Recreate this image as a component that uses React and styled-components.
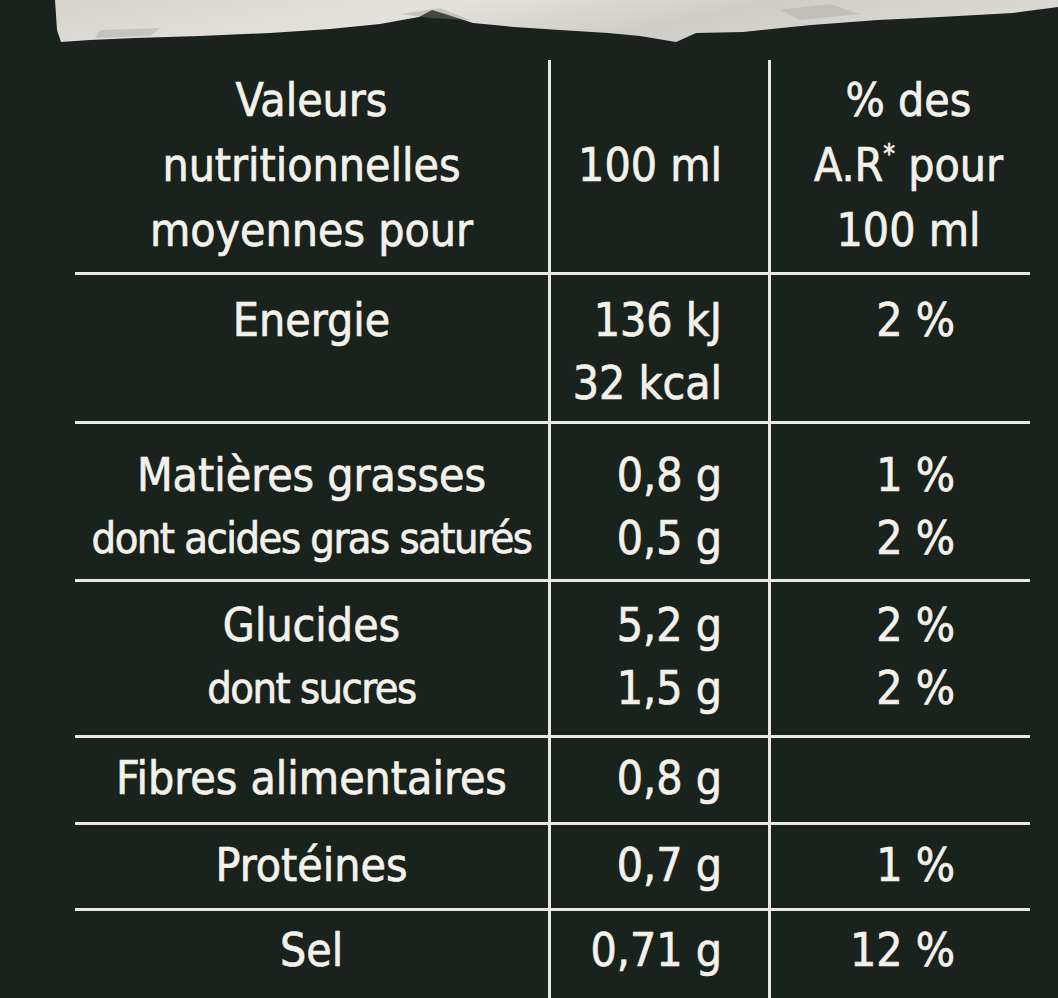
import React from 'react'
import styled, { createGlobalStyle } from 'styled-components'

const GlobalStyle = createGlobalStyle`
  html, body {
    margin: 0;
    padding: 0;
    background: #1a221d;
  }
`

const rows = [
    { pad: 17, label: ['Energie'], value: ['136 kJ', '32 kcal'], pct: ['2 %'] },
    { pad: 23, label: ['Matières grasses', 'dont acides gras saturés'], value: ['0,8 g', '0,5 g'], pct: ['1 %', '2 %'] },
    { pad: 15, label: ['Glucides', 'dont sucres'], value: ['5,2 g', '1,5 g'], pct: ['2 %', '2 %'] },
    { pad: 12, label: ['Fibres alimentaires'], value: ['0,8 g'], pct: [] },
    { pad: 12, label: ['Protéines'], value: ['0,7 g'], pct: ['1 %'] },
    { pad: 11, label: ['Sel'], value: ['0,71 g'], pct: ['12 %'] },
]

const Paper = () => (
    <PaperStrip viewBox="0 0 1058 45" preserveAspectRatio="none">
        <defs>
            <linearGradient id="paper" x1="0" y1="0" x2="1" y2="0.2">
                <stop offset="0" stopColor="#d6d4cc" />
                <stop offset="0.4" stopColor="#e3e1da" />
                <stop offset="0.7" stopColor="#cfcdc5" />
                <stop offset="1" stopColor="#dbd9d1" />
            </linearGradient>
        </defs>
        <polygon
            fill="url(#paper)"
            points="55,0 1058,0 1058,7 1013,13 940,17 878,20 811,25 743,32 696,33 676,42 640,36 608,33 560,30 514,27 473,23 445,14 432,10 419,17 380,24 330,29 270,33 200,36 135,38 90,40 61,42 57,30"
        />
        <polygon fill="#8f8d86" opacity="0.35" points="400,14 440,8 470,20 430,18" />
        <polygon fill="#8f8d86" opacity="0.3" points="100,30 160,28 150,36 95,38" />
        <polygon fill="#8f8d86" opacity="0.25" points="780,10 830,4 860,14 800,20" />
    </PaperStrip>
)

const App = () => {
    const header = {
        pad: 8,
        label: ['Valeurs', 'nutritionnelles', 'moyennes pour'],
        value: ['', '100 ml', ''],
        pct: ['% des', <>A.R<Star>*</Star> pour</>, '100 ml'],
    }
    const all = [header, ...rows]
    return (
        <Page>
            <GlobalStyle />
            <Paper />
            <Table>
                {all.map((row, r) => (
                    <React.Fragment key={r}>
                        <Cell $col={0} $row={r} $pad={row.pad} $head={r === 0}>
                            {row.label.map((t, i) => (
                                <Line key={i} $sub={t.startsWith('dont')}>{t}</Line>
                            ))}
                        </Cell>
                        <Cell $col={1} $row={r} $pad={row.pad} $head={r === 0} $align="end">
                            {row.value.map((t, i) => <Line key={i}>{t || '\u00a0'}</Line>)}
                        </Cell>
                        <Cell $col={2} $row={r} $pad={row.pad} $head={r === 0} $align={r === 0 ? 'center' : 'end'}>
                            {row.pct.map((t, i) => <Line key={i}>{t}</Line>)}
                        </Cell>
                    </React.Fragment>
                ))}
            </Table>
        </Page>
    )
}

export default App

const chalk = '#ebe9e2'

const Page = styled.div`
display : flex;
flex-direction : column;
width : 1058px;
height : 998px;
overflow : hidden;
background-color : #1a221d;
font-family : "DejaVu Sans Condensed", "Liberation Sans Narrow", "DejaVu Sans", sans-serif;
font-stretch : condensed;
color : #f3f1ea;
`

const PaperStrip = styled.svg`
display : block;
width : 1058px;
height : 45px;
flex-shrink : 0;
`

const Table = styled.div`
display : grid;
grid-template-columns : 473px 220px 262px;
grid-template-rows : 212px 149px 158px 156px 87px 86px 1fr;
margin : 15px 0 0 75px;
height : 938px;
`

const Cell = styled.div`
box-sizing : border-box;
display : flex;
flex-direction : column;
align-items : ${p => p.$align === 'end' ? 'flex-end' : 'center'};
padding-top : ${p => p.$pad - (p.$row > 0 ? 3 : 0)}px;
padding-right : ${p => p.$col === 1 ? 46 : p.$col === 2 && p.$align === 'end' ? 75 : 0}px;
padding-left : ${p => p.$col === 2 && p.$align === 'center' ? 16 : 0}px;
border-left : ${p => p.$col > 0 ? `3px solid ${chalk}` : 'none'};
border-top : ${p => p.$row > 0 ? `3px solid ${chalk}` : 'none'};
font-size : 46px;
line-height : ${p => p.$head ? 65 : 63}px;
-webkit-text-stroke : 0.7px #f3f1ea;
`

const Line = styled.span`
display : block;
white-space : nowrap;
font-size : ${p => p.$sub ? 43 : 46}px;
letter-spacing : ${p => p.$sub ? -1.5 : 0}px;
`

const Star = styled.sup`
font-size : 26px;
line-height : 0;
vertical-align : 18px;
`
